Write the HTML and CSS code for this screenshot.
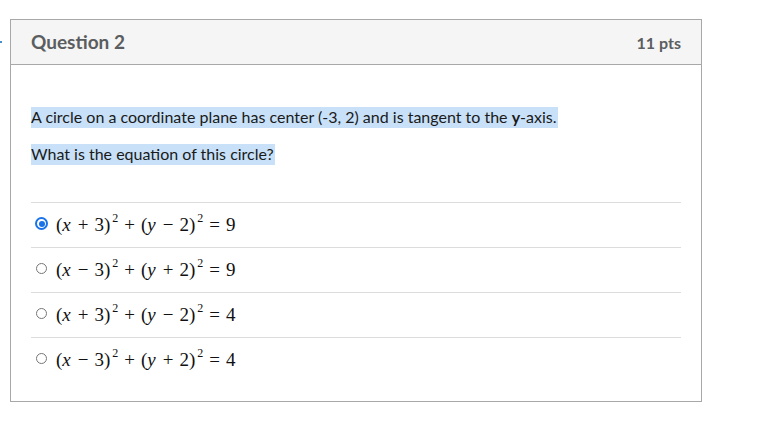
FILE: index.html
```html
<!DOCTYPE html>
<html>
<head>
<meta charset="utf-8">
<link rel="stylesheet" href="styles.css">
</head>
<body>
<div class="page">
  <span class="marker"></span>
  <div class="card">
    <div class="header">
      <span class="title">Question 2</span>
      <span class="pts">11 pts</span>
    </div>
    <div class="body">
      <p class="q"><span class="hl">A circle on a coordinate plane has center (-3, 2) and is tangent to the <b>y</b>-axis.</span></p>
      <p class="q"><span class="hl">What is the equation of this circle?</span></p>
      <div class="answers">
        <label class="ans"><span class="radio checked"></span><span class="math">(<i>x</i><span class="op">+</span>3)<sup>2</sup><span class="op">+</span>(<i>y</i><span class="op">−</span>2)<sup>2</sup><span class="op">=</span>9</span></label>
        <label class="ans"><span class="radio"></span><span class="math">(<i>x</i><span class="op">−</span>3)<sup>2</sup><span class="op">+</span>(<i>y</i><span class="op">+</span>2)<sup>2</sup><span class="op">=</span>9</span></label>
        <label class="ans"><span class="radio"></span><span class="math">(<i>x</i><span class="op">+</span>3)<sup>2</sup><span class="op">+</span>(<i>y</i><span class="op">−</span>2)<sup>2</sup><span class="op">=</span>4</span></label>
        <label class="ans"><span class="radio"></span><span class="math">(<i>x</i><span class="op">−</span>3)<sup>2</sup><span class="op">+</span>(<i>y</i><span class="op">+</span>2)<sup>2</sup><span class="op">=</span>4</span></label>
      </div>
    </div>
  </div>
</div>
</body>
</html>
```
FILE: styles.css
```css
html, body { margin: 0; padding: 0; background: #fff; }
body { font-family: Lato, "Liberation Sans", sans-serif; color: #2d3b45; }
.page { position: relative; padding: 19px 0 0 10px; }
.marker { position: absolute; left: 0; top: 41px; width: 2px; height: 2px; background: #4a90c8; }
.card { width: 690px; border: 1px solid #a8a8a8; }
.header { height: 44px; background: #f5f5f5; border-bottom: 1px solid #a8a8a8; display: flex; align-items: center; justify-content: space-between; padding: 0 20px 0 20px; }
.title { font-size: 19px; font-weight: 700; color: #5b5e60; padding-bottom: 2px; }
.pts { font-size: 16px; font-weight: 700; color: #5b5e60; }
.body { padding: 42px 20px 19px 20px; }
.q { margin: 0 0 16px 0; font-size: 16px; line-height: 20px; color: #1a1a1a; }
.hl { background: #c8e1f8; padding: 0 1px 1px 0; display: inline-block; }
.hl b { font-weight: 700; }
.answers { margin-top: 37px; }
.ans { display: flex; align-items: center; height: 44px; border-top: 1px solid #dcdcdc; padding-left: 5px; }
.radio { width: 11px; height: 11px; border: 1px solid #767676; border-radius: 50%; box-sizing: border-box; margin-right: 9px; margin-top: -3px; }
.radio.checked { border: 2px solid #1a73e8; background: #fff; position: relative; width: 13px; height: 13px; margin-left: -1px; margin-right: 8px; }
.radio.checked::after { content: ""; position: absolute; left: 1.5px; top: 1.5px; width: 6px; height: 6px; border-radius: 50%; background: #1a73e8; }
.math { font-family: "Liberation Serif", "DejaVu Serif", serif; font-size: 19px; color: #111; white-space: nowrap; display: flex; align-items: baseline; }
.math i { font-style: italic; margin-right: 1px; }
.op { margin: 0 6px; }
.math sup { font-size: 12px; vertical-align: 0; position: relative; top: -9px; margin-left: 2px; }
```
